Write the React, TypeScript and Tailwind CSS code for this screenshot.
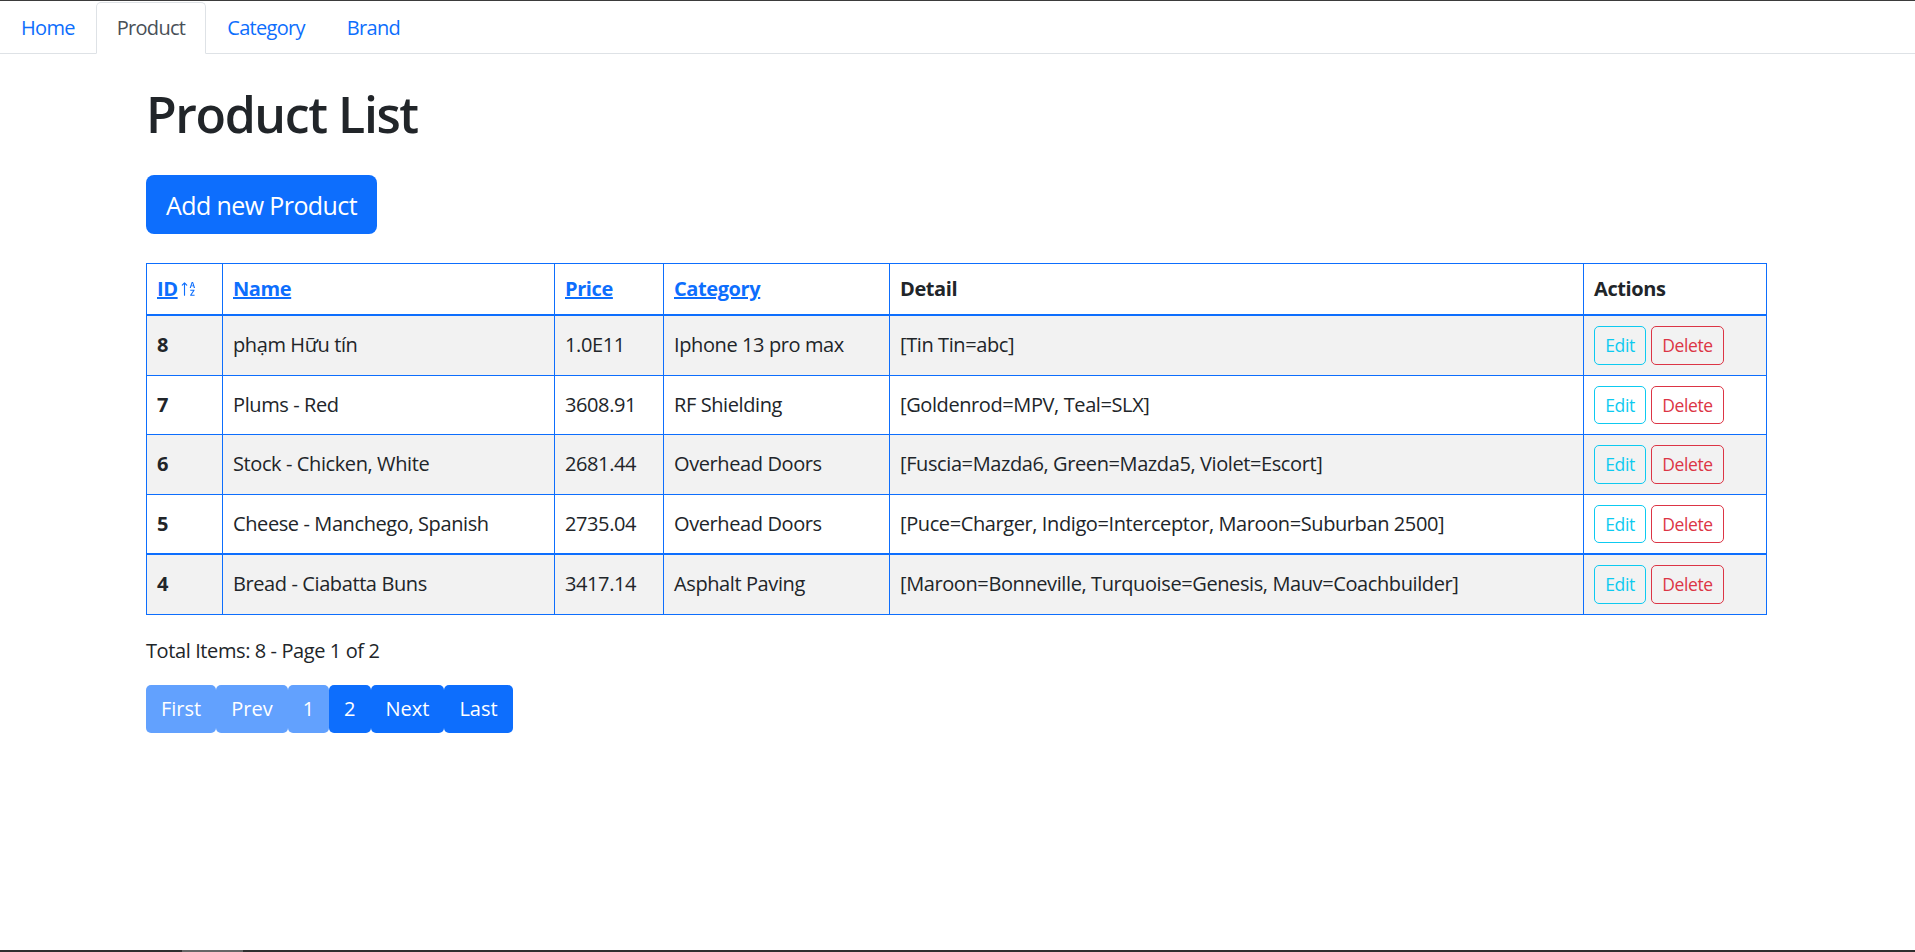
import { BsSortAlphaUp } from "react-icons/bs"

const products = [
  { id: 8, name: "phạm Hữu tín", price: "1.0E11", category: "Iphone 13 pro max", detail: "[Tin Tin=abc]" },
  { id: 7, name: "Plums - Red", price: "3608.91", category: "RF Shielding", detail: "[Goldenrod=MPV, Teal=SLX]" },
  { id: 6, name: "Stock - Chicken, White", price: "2681.44", category: "Overhead Doors", detail: "[Fuscia=Mazda6, Green=Mazda5, Violet=Escort]" },
  { id: 5, name: "Cheese - Manchego, Spanish", price: "2735.04", category: "Overhead Doors", detail: "[Puce=Charger, Indigo=Interceptor, Maroon=Suburban 2500]" },
  { id: 4, name: "Bread - Ciabatta Buns", price: "3417.14", category: "Asphalt Paving", detail: "[Maroon=Bonneville, Turquoise=Genesis, Mauv=Coachbuilder]" },
]

const tabs = ["Home", "Product", "Category", "Brand"]

const pages = [
  { label: "First", disabled: true },
  { label: "Prev", disabled: true },
  { label: "1", disabled: true },
  { label: "2", disabled: false },
  { label: "Next", disabled: false },
  { label: "Last", disabled: false },
]

export default function App() {
  return (
    <div className="min-h-screen flex flex-col border-t border-[#3b3b3b] bg-white text-[#212529] font-['Open_Sans',sans-serif] text-[20px] leading-[30px] tracking-[-0.4px]">
      {/* tabs */}
      <ul className="flex border-b border-[#dee2e6] tracking-[-0.7px]">
        {tabs.map((t) => (
          <li key={t} className="-mb-px">
            {t === "Product" ? (
              <a className="block px-5 py-[10px] mt-px border border-[#dee2e6] border-b-white rounded-t-[5px] text-[#495057] bg-white">
                {t}
              </a>
            ) : (
              <a className="block px-5 py-[10px] mt-px border border-transparent text-[#0d6efd]">{t}</a>
            )}
          </li>
        ))}
      </ul>

      <div className="ml-[146px] w-[1620px]">
        <h1 className="mt-[30px] text-[50px] leading-[60px] font-semibold tracking-[-1.4px]">Product List</h1>
        <button className="mt-[31px] h-[59px] px-5 rounded-[8px] bg-[#0d6efd] text-white text-[25px] tracking-[-0.6px]">
          Add new Product
        </button>

        <table className="mt-[29px] w-[1620px] table-fixed border-collapse border border-[#0d6efd]">
          <colgroup>
            <col className="w-[76px]" />
            <col className="w-[332px]" />
            <col className="w-[109px]" />
            <col className="w-[226px]" />
            <col className="w-[694px]" />
            <col className="w-[183px]" />
          </colgroup>
          <thead>
            <tr className="text-left">
              <th className="border border-[#0d6efd] border-b-2 px-[10px] py-[10px] font-bold">
                <a className="text-[#0d6efd] underline inline-flex items-center">
                  ID
                  <BsSortAlphaUp className="ml-[2px] w-[18px] h-[18px]" />
                </a>
              </th>
              <th className="border border-[#0d6efd] border-b-2 px-[10px] py-[10px] font-bold">
                <a className="text-[#0d6efd] underline">Name</a>
              </th>
              <th className="border border-[#0d6efd] border-b-2 px-[10px] py-[10px] font-bold">
                <a className="text-[#0d6efd] underline">Price</a>
              </th>
              <th className="border border-[#0d6efd] border-b-2 px-[10px] py-[10px] font-bold">
                <a className="text-[#0d6efd] underline">Category</a>
              </th>
              <th className="border border-[#0d6efd] border-b-2 px-[10px] py-[10px] font-bold">Detail</th>
              <th className="border border-[#0d6efd] border-b-2 px-[10px] py-[10px] font-bold">Actions</th>
            </tr>
          </thead>
          <tbody>
            {products.map((p, i) => {
              const cell =
                "border border-[#0d6efd] px-[10px] py-[10px] align-middle " + (p.id === 4 ? "border-t-2" : "")
              return (
                <tr key={p.id} className={i % 2 === 0 ? "bg-[#f2f2f2]" : "bg-white"}>
                  <td className={cell + " font-bold"}>{p.id}</td>
                  <td className={cell}>{p.name}</td>
                  <td className={cell}>{p.price}</td>
                  <td className={cell}>{p.category}</td>
                  <td className={cell}>{p.detail}</td>
                  <td className={cell}>
                    <div className="flex gap-[5px]">
                      <button className="h-[38.5px] w-[52px] rounded-[5px] border border-[#0dcaf0] text-[#0dcaf0] text-[17.5px] leading-[26px]">
                        Edit
                      </button>
                      <button className="h-[38.5px] w-[73px] rounded-[5px] border border-[#dc3545] text-[#dc3545] text-[17.5px] leading-[26px]">
                        Delete
                      </button>
                    </div>
                  </td>
                </tr>
              )
            })}
          </tbody>
        </table>

        <p className="mt-[21px]">Total Items: 8 - Page 1 of 2</p>

        <div className="mt-[19px] flex">
          {pages.map((pg) => (
            <button
              key={pg.label}
              className={
                "h-[48px] px-[15px] rounded-[5px] text-white text-[20px] tracking-normal " +
                (pg.disabled ? "bg-[#62a1fe]" : "bg-[#0d6efd]")
              }
            >
              {pg.label}
            </button>
          ))}
        </div>
      </div>

      <div className="mt-auto h-[2px] flex bg-[#2f2f2f]">
        <div className="ml-[182px] w-[61px] bg-[#666666]" />
      </div>
    </div>
  )
}
